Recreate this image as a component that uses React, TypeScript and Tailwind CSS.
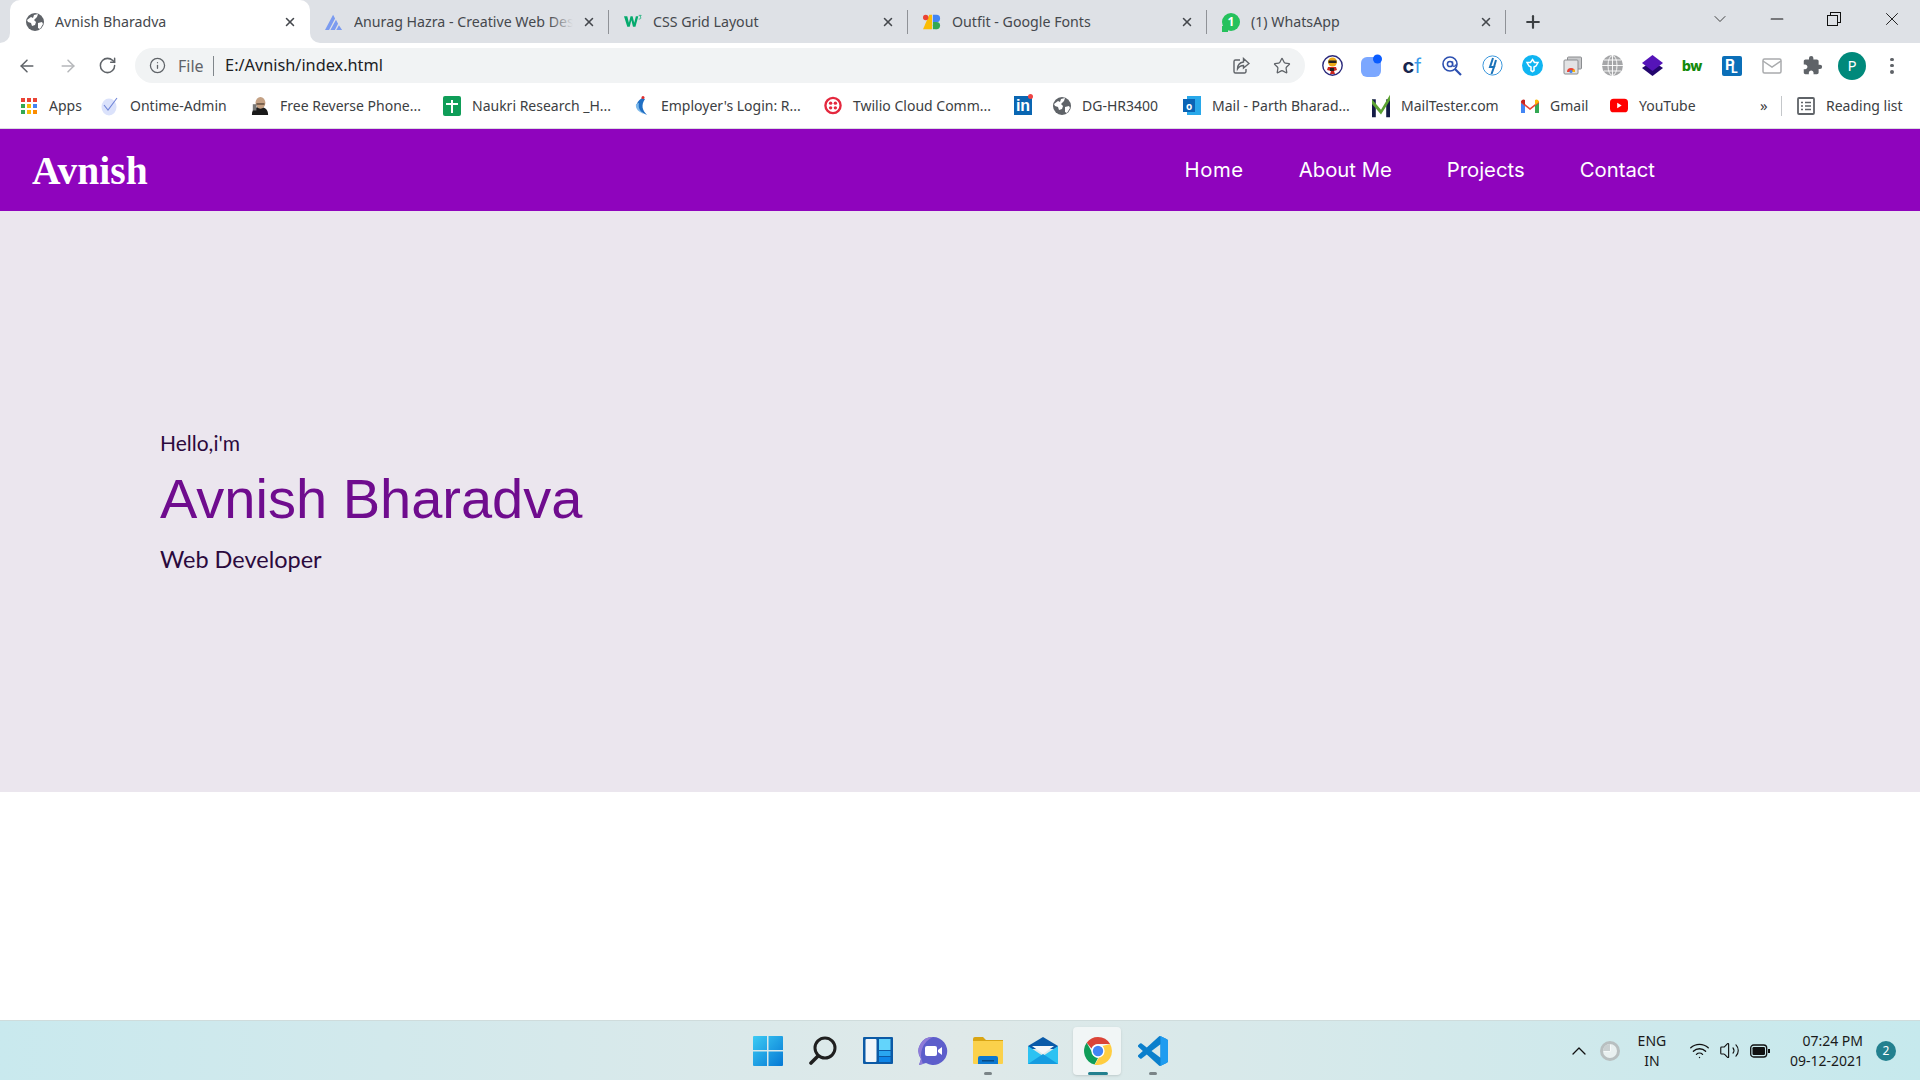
import { ArrowLeft, ArrowRight, ChevronDown, ChevronUp, Info, Minus, Plus, RotateCw, Star, Volume2, Wifi, X } from "lucide-react";
import { MdExtension } from "react-icons/md";
import { ReactNode } from "react";

const Globe = ({ size = 18 }: { size?: number }) => (
  <svg width={size} height={size} viewBox="0 0 18 18">
    <circle cx="9" cy="9" r="9" fill="#5f6368" />
    <path d="M1 7l4-3 2 1 1-3 4-1-1 3-3 3 2 2-1 3-3 1-1-3-3-1zM12 10l4-1 1 2-3 5-2-1z" fill="#fff" />
  </svg>
);

const AnuragIcon = () => (
  <svg width="20" height="18" viewBox="0 0 20 18">
    <path d="M0 18L9 1l2.200 4L4.500 18zM6 18l6.200-11.500L14.500 11 11 18zM12.500 18l3-5.500 3.500 5.500z" fill="#7b9bf0" />
  </svg>
);

const W3Icon = () => (
  <svg width="22" height="17" viewBox="0 0 22 17">
    <path d="M0 2h4l2 8 2-8h2.500l2 8 2-8h3l-3.500 13h-3L9 7l-2 8H4z" fill="#04aa6d" />
    <path d="M18 1h3l-1.500 2c1.500 0 1.500 2.500-.5 2.500h-1" stroke="#04aa6d" strokeWidth=".9" fill="none" />
  </svg>
);

const FontsIcon = () => (
  <svg width="20" height="18" viewBox="0 0 20 18">
    <path d="M0 17L7 1h3v16z" fill="#fbbc04" />
    <circle cx="3" cy="4" r="3" fill="#ea4335" />
    <path d="M11 1h4a4 4 0 010 8h-4z" fill="#4285f4" />
    <circle cx="15" cy="13" r="4" fill="#34a853" />
    <path d="M11 9h4v8h-4z" fill="#34a853" />
  </svg>
);

const WhatsappIcon = () => (
  <div className="relative flex h-[18px] w-[18px] items-center justify-center rounded-full bg-[#25c15c] text-[12px] font-bold leading-none text-white">
    <div className="absolute bottom-[-1px] left-0 h-[6px] w-[6px] bg-[#25c15c]" />
    <span className="relative">1</span>
  </div>
);

const CloseX = () => <X size={14} strokeWidth={2.6} color="#45484d" />;

const Tab = ({
  icon,
  title,
  active,
  fade,
}: {
  icon: ReactNode;
  title: string;
  active?: boolean;
  fade?: boolean;
}) => (
  <div
    className={
      active
        ? "relative flex h-[43px] w-[300px] items-center rounded-t-[10px] bg-white pl-[16px] pr-[12px]"
        : "flex h-[43px] w-[299px] items-center pl-[15px]"
    }
  >
    {active && (
      <>
        <div className="absolute bottom-0 left-[-10px] h-[10px] w-[10px] bg-white">
          <div className="h-full w-full rounded-br-[10px] bg-[#dee1e6]" />
        </div>
        <div className="absolute bottom-0 right-[-10px] h-[10px] w-[10px] bg-white">
          <div className="h-full w-full rounded-bl-[10px] bg-[#dee1e6]" />
        </div>
      </>
    )}
    <div className="flex w-[18px] shrink-0 items-center justify-center">{icon}</div>
    <div className="relative ml-[11px] min-w-0 flex-1 overflow-hidden whitespace-nowrap text-[14.2px] text-[#45484d]">
      {title}
      {fade && <div className="absolute inset-y-0 right-0 w-[24px] bg-gradient-to-r from-transparent to-[#dee1e6]" />}
    </div>
    <div className="ml-[8px] flex w-[16px] shrink-0 items-center justify-center">
      <CloseX />
    </div>
    {!active && <div className="ml-[11px] h-[24px] w-px shrink-0 bg-[#8f9297]" />}
  </div>
);

const ShareIcon = () => (
  <svg width="18" height="18" viewBox="0 0 18 18" fill="none" stroke="#5f6368" strokeWidth="1.400">
    <path d="M8 3H3.500A1.500 1.500 0 002 4.500v10A1.500 1.500 0 003.500 16h9a1.500 1.500 0 001.500-1.500V12" />
    <path d="M11.500 1.500L17 6.500l-5.500 4.500V8.500C9 8.500 7 9.500 5.500 12c0-4 2.500-6.500 6-7z" />
  </svg>
);

const NinjaExt = () => (
  <svg width="21" height="21" viewBox="0 0 21 21">
    <circle cx="10.500" cy="10.500" r="9.700" fill="#fff" stroke="#2b2a7c" strokeWidth="1.400" />
    <circle cx="10.500" cy="7" r="4.500" fill="#e9a917" />
    <rect x="6.500" y="5.500" width="8" height="2.500" fill="#222" />
    <path d="M6 12h8l1 3-3 1 1 3H8l1-3-4-1z" fill="#c8261e" />
    <path d="M8 13h4v3H8z" fill="#222" />
  </svg>
);

const BlueBlob = () => (
  <svg width="22" height="24" viewBox="0 0 22 24">
    <rect x="0" y="3" width="20" height="20" rx="6" fill="#7ba7ff" />
    <circle cx="16.500" cy="5" r="4.500" fill="#0a5cff" />
  </svg>
);

const CfExt = () => (
  <div className="flex h-[22px] w-[22px] items-end justify-center font-['Inter',sans-serif] text-[20px] font-bold leading-[22px]">
    <span className="text-[#16264f]">c</span>
    <span className="font-normal text-[#3b9bea]">f</span>
  </div>
);

const AtExt = () => (
  <svg width="20" height="20" viewBox="0 0 20 20" fill="none" stroke="#2c4fb0">
    <circle cx="8" cy="8" r="7" strokeWidth="1.600" />
    <circle cx="8" cy="8" r="2.600" strokeWidth="1.500" />
    <path d="M10.600 5.500v3.500c0 2 3 2 3-.5" strokeWidth="1.300" />
    <path d="M13 13l6 6" strokeWidth="2.200" />
  </svg>
);

const HunterExt = () => (
  <svg width="21" height="21" viewBox="0 0 21 21" fill="none">
    <circle cx="10.500" cy="10.500" r="9.600" stroke="#3b97dc" strokeWidth="1" />
    <path d="M11 3L8 12h4l-2.500 7" stroke="#1b72b8" strokeWidth="2" />
    <path d="M14 5l-2 7" stroke="#1b72b8" strokeWidth="2" />
  </svg>
);

const TealExt = () => (
  <svg width="21" height="21" viewBox="0 0 21 21">
    <circle cx="10.500" cy="10.500" r="10.500" fill="#10b5f2" />
    <path d="M10.500 4.500l2 3h3.500l-2 3.500-2 1v3.500l-1.500 1-1.500-1V12l-2-1-2-3.500h3.500z" fill="none" stroke="#fff" strokeWidth="1.500" />
  </svg>
);

const TabsExt = () => (
  <svg width="19" height="19" viewBox="0 0 19 19">
    <rect x="4.500" y="1" width="14" height="12" rx="1" fill="#c8c9cb" stroke="#8b8d90" />
    <rect x="1" y="4" width="14" height="14" rx="1" fill="#e3e3e4" stroke="#8b8d90" />
    <path d="M4 16a4 4 0 018 0z" fill="#ea4335" />
    <path d="M8 16h4a4 4 0 00-1-3z" fill="#fbbc04" />
    <circle cx="8" cy="15.500" r="1.500" fill="#4285f4" />
  </svg>
);

const GrayGlobe = () => (
  <svg width="21" height="21" viewBox="0 0 21 21" fill="none" stroke="#fff" strokeWidth=".9">
    <circle cx="10.500" cy="10.500" r="10.500" fill="#a5a6a8" stroke="none" />
    <ellipse cx="10.500" cy="10.500" rx="4.500" ry="10" />
    <path d="M10.500 0v21M0 10.500h21M2 5h17M2 16h17" />
  </svg>
);

const LayersExt = () => (
  <svg width="21" height="21" viewBox="0 0 21 21">
    <path d="M10.500 6L21 13l-10.500 8L0 13z" fill="#23066e" />
    <path d="M10.500 0L21 8l-10.500 8L0 8z" fill="#5514b8" />
  </svg>
);

const BwExt = () => (
  <div className="flex h-[20px] w-[20px] items-center justify-center font-['Inter',sans-serif] text-[14px] font-extrabold tracking-[-0.5px] text-[#148a0b]">
    bw
  </div>
);

const PlExt = () => (
  <div className="relative h-[20px] w-[20px] rounded-[2px] bg-[#0b6fb8] font-['Inter',sans-serif] font-bold leading-none text-white">
    <span className="absolute left-[3px] top-[1px] text-[15px]">P</span>
    <span className="absolute left-[9px] top-[7px] text-[12px]">L</span>
  </div>
);

const MailExt = () => (
  <svg width="20" height="16" viewBox="0 0 20 16" fill="none" stroke="#a9abad" strokeWidth="1.500">
    <rect x="1" y="1" width="18" height="14" rx="1.500" />
    <path d="M1 3l9 6 9-6" />
  </svg>
);

const AppsIcon = () => (
  <div className="grid h-[16px] w-[16px] grid-cols-3 gap-[2px]">
    {["#ea4335", "#ea4335", "#ea4335", "#34a853", "#fbbc04", "#4285f4", "#34a853", "#fbbc04", "#fb8c00"].map((c, i) => (
      <div key={i} style={{ backgroundColor: c }} />
    ))}
  </div>
);

const OntimeIcon = () => (
  <svg width="18" height="20" viewBox="0 0 18 20">
    <ellipse cx="8" cy="11" rx="7.500" ry="8.500" fill="#dbe2fb" />
    <path d="M3 9l4 5 9-12" fill="none" stroke="#7186d8" strokeWidth="1.100" />
  </svg>
);

const ManIcon = () => (
  <svg width="20" height="20" viewBox="0 0 20 20">
    <path d="M1 20c0-6 3-9 9-9s9 3 9 9z" fill="#1a1a1a" />
    <ellipse cx="10.500" cy="6.500" rx="5.500" ry="6.500" fill="#c4a184" />
    <path d="M6 7h9v1.500H6z" fill="#5a4637" />
    <path d="M2 8h4v7H2z" fill="#777" />
  </svg>
);

const NaukriIcon = () => (
  <svg width="18" height="20" viewBox="0 0 18 20">
    <rect width="18" height="20" rx="2" fill="#0f9d58" />
    <path d="M3 7h12v2H10v8H8V9H3z" fill="#fff" />
    <path d="M8 4h2v3H8z" fill="#fff" />
  </svg>
);

const EmployerIcon = () => (
  <svg width="18" height="20" viewBox="0 0 18 20">
    <path d="M10 2C2 7 3 14 15 19 10 14 9 9 13 3z" fill="#1f6fc4" />
    <path d="M4 8C3 13 7 16 12 18 8 15 6 12 7 7z" fill="#7cb8ea" />
    <circle cx="11" cy="1.500" r="1.500" fill="#e02b2b" />
  </svg>
);

const TwilioIcon = () => (
  <svg width="19" height="19" viewBox="0 0 19 19">
    <circle cx="9.500" cy="9.500" r="8" fill="none" stroke="#e4283e" strokeWidth="2.500" />
    <circle cx="7" cy="7" r="1.800" fill="#e4283e" />
    <circle cx="12" cy="7" r="1.800" fill="#e4283e" />
    <circle cx="7" cy="12" r="1.800" fill="#e4283e" />
    <circle cx="12" cy="12" r="1.800" fill="#e4283e" />
  </svg>
);

const LinkedinIcon = () => (
  <div className="relative flex h-[19px] w-[18px] items-end justify-center bg-[#0a66b2] font-['Liberation_Sans',sans-serif] text-[16px] font-bold leading-[18px] text-white">
    in
    <div className="absolute right-[-1px] top-[-2px] h-[5px] w-[5px] rounded-full bg-[#ef4444]" />
  </div>
);

const OutlookIcon = () => (
  <div className="relative h-[19px] w-[20px]">
    <div className="absolute right-0 top-0 h-[19px] w-[14px] bg-[#28a8ea]" />
    <div className="absolute bottom-[3px] left-0 flex h-[13px] w-[12px] items-center justify-center bg-[#0a64b5] text-[10px] font-bold leading-none text-white">
      o
    </div>
  </div>
);

const MailTesterIcon = () => (
  <svg width="19" height="24" viewBox="0 0 19 24">
    <path d="M0 5h4v19H0zM15 5h4v19h-4z" fill="#141b46" />
    <path d="M0 5l9.500 11L19 0v6L9.500 21 0 10z" fill="#5ca332" />
  </svg>
);

const GmailIcon = () => (
  <svg width="18" height="14" viewBox="0 0 18 14">
    <path d="M0 3v11h4V6z" fill="#4285f4" />
    <path d="M14 6v8h4V3z" fill="#34a853" />
    <path d="M0 2l9 7 9-7v2L9 11 0 4z" fill="#ea4335" />
    <path d="M0 3c0-2 2.500-3.500 4-2v5z" fill="#c5221f" />
    <path d="M14 1c1.500-1.500 4 0 4 2l-4 3z" fill="#fbbc04" />
  </svg>
);

const YoutubeIcon = () => (
  <svg width="20" height="15" viewBox="0 0 20 15">
    <rect width="20" height="15" rx="4" fill="#f00" />
    <path d="M8 4.500l5 3-5 3z" fill="#fff" />
  </svg>
);

const ReadingIcon = () => (
  <svg width="18" height="18" viewBox="0 0 18 18" fill="none" stroke="#5f6368" strokeWidth="1.500">
    <rect x="1" y="1" width="16" height="16" rx="1" strokeWidth="1.800" />
    <path d="M4 5.500h2M8 5.500h6M4 9h2M8 9h6M4 12.500h2M8 12.500h6" />
  </svg>
);

const Bookmark = ({ icon, label, className }: { icon: ReactNode; label?: string; className: string }) => (
  <div className={`flex shrink-0 items-center ${className}`}>
    <div className="flex w-[18px] shrink-0 items-center justify-center">{icon}</div>
    {label && <span className="ml-[11px] whitespace-nowrap">{label}</span>}
  </div>
);

const WinLogo = () => (
  <svg width="30" height="30" viewBox="0 0 30 30">
    <defs>
      <linearGradient id="win" x1="0" y1="0" x2="1" y2="1">
        <stop offset="0" stopColor="#3ccbf4" />
        <stop offset="1" stopColor="#0578d4" />
      </linearGradient>
    </defs>
    <path d="M0 1a1 1 0 011-1h13v14H0zM15.500 0H29a1 1 0 011 1v13H15.500zM0 15.500h14V30H1a1 1 0 01-1-1zM15.500 15.500H30V29a1 1 0 01-1 1H15.500z" fill="url(#win)" />
  </svg>
);

const SearchIcon = () => (
  <svg width="28" height="30" viewBox="0 0 28 30" fill="none" stroke="#1f1f1f">
    <circle cx="16" cy="12" r="10" strokeWidth="3" />
    <path d="M9 20l-7 7" strokeWidth="3.600" strokeLinecap="round" />
  </svg>
);

const WidgetsIcon = () => (
  <svg width="30" height="30" viewBox="0 0 30 30">
    <rect width="30" height="27" y="1" rx="1" fill="#0c5aa6" />
    <rect x="2.500" y="3" width="11" height="23" rx="1" fill="#f2f6fa" />
    <rect x="16" y="3" width="11.500" height="11" fill="#63d4fb" />
    <rect x="16" y="15" width="11.500" height="5" fill="#29a6f0" />
    <rect x="16" y="21" width="11.500" height="5" fill="#0f86e8" />
  </svg>
);

const ChatIcon = () => (
  <svg width="30" height="30" viewBox="0 0 30 30">
    <path d="M15 1a14 14 0 11-7 26l-7 2 2-6A14 14 0 0115 1z" fill="#5d5ecb" />
    <path d="M15 1A14 14 0 003 23l-2 6 4-1A20 20 0 0115 1z" fill="#8f7bd8" />
    <rect x="7" y="10" width="12" height="10" rx="2" fill="#fff" />
    <path d="M20 14l4-3v8l-4-3z" fill="#fff" />
  </svg>
);

const FolderIcon = () => (
  <svg width="30" height="28" viewBox="0 0 30 28">
    <path d="M0 2a2 2 0 012-2h8l3 3h17v4H0z" fill="#d9a514" />
    <path d="M0 4h30v22a1 1 0 01-1 1H1a1 1 0 01-1-1z" fill="#fbd14b" />
    <path d="M5 27v-6a2 2 0 012-2h16a2 2 0 012 2v6z" fill="#0c78d0" />
    <path d="M9 23h12v1.500H9z" fill="#064a86" />
  </svg>
);

const MailIcon = () => (
  <svg width="30" height="28" viewBox="0 0 30 28">
    <path d="M0 9L15 0l15 9v3H0z" fill="#0a5aa8" />
    <path d="M4 9h22l-11 8z" fill="#f5f7f9" />
    <path d="M0 9l15 10L30 9v18H0z" fill="#2cc2f2" />
    <path d="M0 27l15-10 15 10z" fill="#159ce0" />
  </svg>
);

const ChromeIcon = () => (
  <svg width="28" height="28" viewBox="0 0 28 28">
    <path d="M14 0a14 14 0 0112.100 7H14a7 7 0 00-6.500 4.500L2.700 5.800A14 14 0 0114 0z" fill="#db4437" />
    <path d="M2.700 5.800l6 10.400A7 7 0 0014 21l-3.400 6.600A14 14 0 012.700 5.800z" fill="#0f9d58" />
    <path d="M26.100 7A14 14 0 0114 28h-3.400l6-10.400A7 7 0 0018.500 9z" fill="#ffcd40" />
    <circle cx="14" cy="14" r="6.600" fill="#fff" />
    <circle cx="14" cy="14" r="5.200" fill="#4285f4" />
  </svg>
);

const VsCodeIcon = () => (
  <svg width="30" height="30" viewBox="0 0 100 100">
    <path
      d="M96.400 10.800 75.800.9a6.200 6.200 0 0 0-7.100 1.200L29.300 38.100 12.100 25.100a4.200 4.200 0 0 0-5.300.2L1.400 30.200a4.200 4.200 0 0 0 0 6.200L16.200 50 1.400 63.600a4.200 4.200 0 0 0 0 6.200l5.500 4.900a4.200 4.200 0 0 0 5.300.2l17.200-13 39.400 36a6.200 6.200 0 0 0 7.100 1.200l20.600-9.900a6.200 6.200 0 0 0 3.500-5.600V16.400a6.200 6.200 0 0 0-3.500-5.600ZM75 72.700 45.100 50 75 27.300Z"
      fill="#0b7fcc"
    />
    <path d="M72 1.500 75.800.9l20.600 9.900a6.200 6.200 0 0 1 3.600 5.600v67.200a6.200 6.200 0 0 1-3.500 5.600L75.800 99.100 72 98.500l3-3V4.500z" fill="#1f9cf0" />
  </svg>
);

const BatteryIcon = () => (
  <svg width="20" height="14" viewBox="0 0 20 14" fill="none">
    <rect x=".7" y="1" width="16" height="12" rx="3" stroke="#111" strokeWidth="1.300" />
    <rect x="2.500" y="3" width="12.500" height="8" rx="1.200" fill="#111" />
    <path d="M18 5h2v4h-2z" fill="#111" />
  </svg>
);

const TrayClock = () => (
  <svg width="20" height="20" viewBox="0 0 20 20">
    <circle cx="10" cy="10" r="8.500" fill="#e9f0f0" stroke="#b8bfc0" strokeWidth="3" />
    <path d="M10 4v6H4" fill="none" stroke="#fff" strokeWidth="1.200" />
    <path d="M10 3a7 7 0 00-7 7h7z" fill="#c9d0d1" />
  </svg>
);

export default function App() {
  return (
    <div className="flex h-[1080px] w-[1920px] flex-col overflow-hidden bg-white font-['Noto_Sans',sans-serif]">
      {/* tab strip */}
      <div className="flex h-[43px] shrink-0 items-center bg-[#dee1e6] pl-[10px]">
        <Tab active icon={<Globe />} title="Avnish Bharadva" />
        <Tab fade icon={<AnuragIcon />} title="Anurag Hazra - Creative Web Design" />
        <Tab icon={<W3Icon />} title="CSS Grid Layout" />
        <Tab icon={<FontsIcon />} title="Outfit - Google Fonts" />
        <Tab icon={<WhatsappIcon />} title="(1) WhatsApp" />
        <Plus size={20} strokeWidth={2.6} color="#3c4043" className="ml-[17px]" />
        <ChevronDown size={20} strokeWidth={1} color="#222" className="ml-[167px] mb-[5px]" />
        <Minus size={20} strokeWidth={1.3} color="#111" className="ml-[37px] mb-[5px]" />
        <div className="relative ml-[40px] mb-[6px] h-[14px] w-[14px]">
          <div className="absolute right-0 top-0 h-[11px] w-[11px] border border-[#111]" />
          <div className="absolute bottom-0 left-0 h-[11px] w-[11px] border border-[#111] bg-[#dee1e6]" />
        </div>
        <X size={22} strokeWidth={1} color="#111" className="ml-[40px] mb-[5px]" />
      </div>

      {/* toolbar */}
      <div className="flex h-[44px] shrink-0 items-center bg-white pb-[4px] pt-[5px]">
        <ArrowLeft size={20} strokeWidth={1.8} color="#5f6368" className="ml-[17px]" />
        <ArrowRight size={20} strokeWidth={1.8} color="#b5b7ba" className="ml-[21px]" />
        <RotateCw size={19} strokeWidth={1.9} color="#5f6368" className="ml-[20px]" />
        <div className="ml-[18px] flex h-[35px] w-[1170px] items-center rounded-full bg-[#f1f3f4] pl-[14px] pr-[14px]">
          <Info size={17} strokeWidth={1.8} color="#5f6368" />
          <span className="ml-[12px] text-[16px] text-[#5f6368]">File</span>
          <div className="ml-[9px] h-[20px] w-[1.500px] bg-[#80868b]" />
          <span className="ml-[11px] text-[16.300px] text-[#202124]">E:/Avnish/index.html</span>
          <div className="ml-auto flex items-center gap-[23px]">
            <ShareIcon />
            <Star size={18} strokeWidth={1.7} color="#5f6368" />
          </div>
        </div>
        <div className="ml-[7px] grid grid-cols-[repeat(15,40px)] items-center justify-items-center">
          <NinjaExt />
          <BlueBlob />
          <CfExt />
          <AtExt />
          <HunterExt />
          <TealExt />
          <TabsExt />
          <GrayGlobe />
          <LayersExt />
          <BwExt />
          <PlExt />
          <MailExt />
          <MdExtension size={21} color="#5f6368" />
          <div className="flex h-[28px] w-[28px] items-center justify-center rounded-full bg-[#00897b] text-[15px] text-white">P</div>
          <div className="flex h-[16px] flex-col justify-between">
            <div className="h-[3.500px] w-[3.500px] rounded-full bg-[#5f6368]" />
            <div className="h-[3.500px] w-[3.500px] rounded-full bg-[#5f6368]" />
            <div className="h-[3.500px] w-[3.500px] rounded-full bg-[#5f6368]" />
          </div>
        </div>
      </div>

      {/* bookmarks */}
      <div className="flex h-[42px] shrink-0 items-center border-b border-[#dadce0] bg-white pb-[4px] pl-[20px] text-[14px] text-[#3c4043]">
        <Bookmark className="w-[81px]" icon={<AppsIcon />} label="Apps" />
        <Bookmark className="w-[150px]" icon={<OntimeIcon />} label="Ontime-Admin" />
        <Bookmark className="w-[192px]" icon={<ManIcon />} label="Free Reverse Phone..." />
        <Bookmark className="w-[189px]" icon={<NaukriIcon />} label="Naukri Research _H..." />
        <Bookmark className="w-[192px]" icon={<EmployerIcon />} label="Employer's Login: R..." />
        <Bookmark className="w-[190px]" icon={<TwilioIcon />} label="Twilio Cloud Comm..." />
        <Bookmark className="w-[39px]" icon={<LinkedinIcon />} />
        <Bookmark className="w-[130px]" icon={<Globe />} label="DG-HR3400" />
        <Bookmark className="w-[189px]" icon={<OutlookIcon />} label="Mail - Parth Bharad..." />
        <Bookmark className="w-[149px]" icon={<MailTesterIcon />} label="MailTester.com" />
        <Bookmark className="w-[89px]" icon={<GmailIcon />} label="Gmail" />
        <Bookmark className="w-[150px]" icon={<YoutubeIcon />} label="YouTube" />
        <span className="w-[21px] text-[15px] leading-none">»</span>
        <div className="h-[20px] w-px bg-[#c4c7ca]" />
        <div className="ml-[15px]">
          <ReadingIcon />
        </div>
        <span className="ml-[11px] whitespace-nowrap">Reading list</span>
      </div>

      {/* site nav */}
      <nav className="flex h-[82px] shrink-0 items-center justify-between bg-[#8f04bd] pl-[32px] pr-[265px] text-white">
        <div className="pt-[3px] font-['Liberation_Serif',serif] text-[39.500px] font-bold leading-none">Avnish</div>
        <ul className="flex gap-[55px] font-['Inter',sans-serif] text-[20.300px]">
          <li className="tracking-[0.6px]">Home</li>
          <li>About Me</li>
          <li>Projects</li>
          <li>Contact</li>
        </ul>
      </nav>

      {/* hero */}
      <section className="flex h-[581px] shrink-0 flex-col justify-center bg-[#ebe6ee] pl-[160px] pt-[2px]">
        <p className="font-['Lato',sans-serif] text-[21px] leading-[30px] text-[#2b0a3d]">Hello,i'm</p>
        <h1 className="mt-[5px] font-['Liberation_Sans',sans-serif] text-[56px] leading-[72px] text-[#6f0c8e]">Avnish Bharadva</h1>
        <p className="mt-[6px] font-['Lato',sans-serif] text-[23.500px] leading-[36px] text-[#2b0a3d]">Web Developer</p>
      </section>

      <div className="flex-1 bg-white" />

      {/* taskbar */}
      <div className="grid h-[60px] shrink-0 grid-cols-[1fr_auto_1fr] items-center border-t border-[#cfdcdc] bg-gradient-to-r from-[#c9e9ee] via-[#dfe9e9] to-[#c6e9ed]">
        <div />
        <div className="flex items-center">
          {[
            { el: <WinLogo /> },
            { el: <SearchIcon /> },
            { el: <WidgetsIcon /> },
            { el: <ChatIcon /> },
            { el: <FolderIcon />, dot: true },
            { el: <MailIcon /> },
            { el: <ChromeIcon />, on: true },
            { el: <VsCodeIcon />, dot: true },
          ].map((it, i) => (
            <div key={i} className="relative flex h-[48px] w-[55px] items-center justify-center">
              {it.on && <div className="absolute inset-y-0 left-[3px] right-[4px] rounded-[4px] bg-[#f1f6f6] shadow-sm" />}
              <div className="relative flex items-center justify-center">{it.el}</div>
              {it.dot && <div className="absolute bottom-[0px] left-[24px] h-[3px] w-[8px] rounded-full bg-[#7b8487]" />}
              {it.on && <div className="absolute bottom-[0px] left-[18px] h-[3px] w-[20px] rounded-full bg-[#23808f]" />}
            </div>
          ))}
        </div>
        <div className="flex items-center justify-end pr-[24px] text-[14px] leading-[20px] text-[#1a1a1a]">
          <ChevronUp size={24} strokeWidth={1.3} color="#111" />
          <div className="ml-[9px]">
            <TrayClock />
          </div>
          <div className="ml-[8px] flex w-[48px] flex-col items-center">
            <span>ENG</span>
            <span>IN</span>
          </div>
          <Wifi size={21} strokeWidth={1.5} color="#111" className="ml-[13px]" />
          <Volume2 size={21} strokeWidth={1.3} color="#111" className="ml-[9px]" />
          <div className="ml-[10px]">
            <BatteryIcon />
          </div>
          <div className="ml-[20px] flex flex-col items-end">
            <span>07:24 PM</span>
            <span>09-12-2021</span>
          </div>
          <div className="ml-[13px] flex h-[20px] w-[20px] items-center justify-center rounded-full bg-[#23808f] text-[12px] text-white">2</div>
        </div>
      </div>
    </div>
  );
}
